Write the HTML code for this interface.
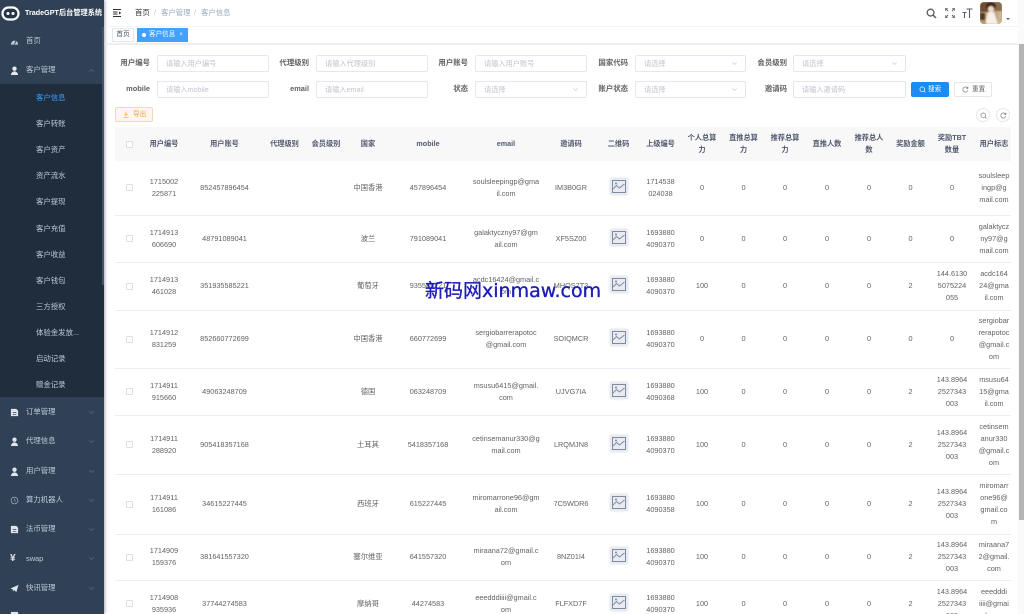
<!DOCTYPE html>
<html lang="zh"><head><meta charset="utf-8"><title>TradeGPT</title>
<style>
*{box-sizing:border-box}
html,body{margin:0;padding:0;width:1024px;height:614px;overflow:hidden;background:#fff}
body{font-family:"Liberation Sans","Noto Sans CJK SC",sans-serif;position:relative;color:#606266;font-size:7.3px;filter:blur(.35px)}
.a{position:absolute;white-space:nowrap}
#side{position:absolute;left:0;top:0;width:104px;height:614px;background:#304156;overflow:hidden;box-shadow:1px 0 3px rgba(0,21,41,.35)}
#sub{position:absolute;left:0;top:84px;width:104px;height:313px;background:#1f2d3d}
.m{position:absolute;left:26px;color:#bfcbd9;font-size:7.4px;line-height:12px;white-space:nowrap}
.s{position:absolute;left:36px;color:#bfcbd9;font-size:7.4px;line-height:12px;white-space:nowrap}
.ic{position:absolute;left:10px;width:9px;height:9px}
.ar{position:absolute;left:89px;width:5px;height:3px}
.lb{position:absolute;font-weight:700;font-size:7.4px;color:#606266;line-height:12px;text-align:right;white-space:nowrap}
.in{position:absolute;height:17px;border:1px solid #e4e7ed;border-radius:2px;background:#fff;color:#c0c4cc;font-size:7.2px;line-height:15px;padding-left:8px;white-space:nowrap}
.in svg{position:absolute;right:8px;top:6px;width:5px;height:3px}
#tw{position:absolute;left:115px;top:127px;width:896px;height:487px;overflow:hidden}
table{border-collapse:collapse;table-layout:fixed;width:900px}
td,th{padding:0;text-align:center;vertical-align:middle;line-height:12px;border-bottom:1px solid #ebeef5;font-size:7.3px;font-weight:400;white-space:nowrap;overflow:hidden}
th{background:#f8f8f9;color:#515a6e;font-weight:700;border-bottom:0;font-size:7.2px}
.cb{display:inline-block;width:7px;height:7px;border:1px solid #dcdfe6;border-radius:1px;background:#fff;vertical-align:middle}
.im{display:block;margin:-3px auto 0;width:18px;height:17px;background:#e9ebf2;border-radius:2px;box-shadow:0 0 2px rgba(0,0,0,.15);padding:2px}
.im svg{display:block;width:14px;height:13px}
</style></head><body>

<div id="side">
  <div id="sub"></div>
  <div style="position:absolute;left:102px;top:27px;width:2px;height:258px;background:#43536a"></div>
  <svg class="a" style="left:1px;top:6px" width="19" height="15" viewBox="0 0 19 15"><rect x="1.5" y="1.5" width="16" height="12" rx="6" fill="#26364a" stroke="#fff" stroke-width="2.2"/><circle cx="7" cy="7.5" r="1.5" fill="#fff"/><circle cx="12" cy="7.5" r="1.5" fill="#fff"/></svg>
  <div class="a" style="left:25px;top:6px;color:#fff;font-weight:700;font-size:7.2px;line-height:14px">TradeGPT后台管理系统</div>

  <svg class="ic" style="top:37px" viewBox="0 0 10 10"><path d="M1 8.500a4 4.500 0 0 1 8 0z" fill="#bfcbd9"/><path d="M5 8 6.500 4.500" stroke="#304156" stroke-width="1"/></svg><div class="m" style="top:35px">首页</div>
  <svg class="ic" style="top:66px" viewBox="0 0 10 10"><circle cx="5" cy="3" r="2.400" fill="#e4eaf1"/><path d="M1 10a4 4 0 0 1 8 0z" fill="#e4eaf1"/></svg><div class="m" style="top:64px">客户管理</div>
  <svg class="ar" style="top:69px" viewBox="0 0 5 3"><path d="M.3 2.700 2.500.5l2.200 2.200" fill="none" stroke="#66758a" stroke-width=".6"/></svg>

  <div class="s" style="top:92px;color:#409eff">客户信息</div>
  <div class="s" style="top:118px">客户转账</div>
  <div class="s" style="top:144px">客户资产</div>
  <div class="s" style="top:170px">资产流水</div>
  <div class="s" style="top:196px">客户提现</div>
  <div class="s" style="top:223px">客户充值</div>
  <div class="s" style="top:249px">客户收益</div>
  <div class="s" style="top:275px">客户钱包</div>
  <div class="s" style="top:301px">三方授权</div>
  <div class="s" style="top:327px">体验金发放...</div>
  <div class="s" style="top:353px">启动记录</div>
  <div class="s" style="top:379px">赠金记录</div>

  <svg class="ic" style="top:408px" viewBox="0 0 10 10"><path d="M1 1h6l2 2v6H1z" fill="#dfe5ec"/><path d="M3 5h4M3 7h4" stroke="#304156" stroke-width=".8"/></svg><div class="m" style="top:406px">订单管理</div>
  <svg class="ic" style="top:437px" viewBox="0 0 10 10"><circle cx="5" cy="3" r="2.400" fill="#dfe5ec"/><path d="M1 10a4 4 0 0 1 8 0z" fill="#dfe5ec"/></svg><div class="m" style="top:435px">代理信息</div>
  <svg class="ic" style="top:467px" viewBox="0 0 10 10"><circle cx="5" cy="3" r="2.400" fill="#dfe5ec"/><path d="M1 10a4 4 0 0 1 8 0z" fill="#dfe5ec"/></svg><div class="m" style="top:465px">用户管理</div>
  <svg class="ic" style="top:496px" viewBox="0 0 10 10"><circle cx="5" cy="5" r="3.800" fill="none" stroke="#9fb0c2" stroke-width=".8"/><path d="M5 2.800V5l1.500 1" fill="none" stroke="#9fb0c2" stroke-width=".7"/></svg><div class="m" style="top:494px">算力机器人</div>
  <svg class="ic" style="top:525px" viewBox="0 0 10 10"><path d="M1 1h6l2 2v6H1z" fill="#dfe5ec"/><path d="M3 5h4M3 7h4" stroke="#304156" stroke-width=".8"/></svg><div class="m" style="top:523px">法币管理</div>
  <div class="a" style="left:10px;top:552px;color:#dfe5ec;font-size:10px;line-height:13px;font-weight:700">¥</div><div class="m" style="top:553px">swap</div>
  <svg class="ic" style="top:584px" viewBox="0 0 10 10"><path d="M.5 5 9.500 1 7 9 4.500 6.500 3.500 8.500 3 6z" fill="#dfe5ec"/></svg><div class="m" style="top:582px">快讯管理</div>
  <svg class="ic" style="top:611px" viewBox="0 0 10 10"><path d="M1 1h8v8H1z" fill="#dfe5ec"/></svg>

  <svg class="ar" style="top:411px" viewBox="0 0 5 3"><path d="M.3.3 2.500 2.500 4.700.3" fill="none" stroke="#66758a" stroke-width=".6"/></svg>
  <svg class="ar" style="top:440px" viewBox="0 0 5 3"><path d="M.3.3 2.500 2.500 4.700.3" fill="none" stroke="#66758a" stroke-width=".6"/></svg>
  <svg class="ar" style="top:470px" viewBox="0 0 5 3"><path d="M.3.3 2.500 2.500 4.700.3" fill="none" stroke="#66758a" stroke-width=".6"/></svg>
  <svg class="ar" style="top:499px" viewBox="0 0 5 3"><path d="M.3.3 2.500 2.500 4.700.3" fill="none" stroke="#66758a" stroke-width=".6"/></svg>
  <svg class="ar" style="top:528px" viewBox="0 0 5 3"><path d="M.3.3 2.500 2.500 4.700.3" fill="none" stroke="#66758a" stroke-width=".6"/></svg>
  <svg class="ar" style="top:557px" viewBox="0 0 5 3"><path d="M.3.3 2.500 2.500 4.700.3" fill="none" stroke="#66758a" stroke-width=".6"/></svg>
  <svg class="ar" style="top:587px" viewBox="0 0 5 3"><path d="M.3.3 2.500 2.500 4.700.3" fill="none" stroke="#66758a" stroke-width=".6"/></svg>
</div>

<!-- top bar -->
<div class="a" style="left:105px;top:26px;width:913px;height:1px;background:#f2f3f5"></div>
<svg class="a" style="left:113px;top:9px" width="9" height="8" viewBox="0 0 9 8"><path d="M0 .5h8M0 3h4.500M0 5h4.500M0 7.500h8" stroke="#303133" stroke-width="1"/><path d="M6 2.500v3L8.300 4z" fill="#303133"/></svg>
<div class="a" style="left:135px;top:7px;line-height:12px;font-size:7.4px;color:#303133">首页</div>
<div class="a" style="left:154px;top:7px;line-height:12px;font-size:7.4px;color:#c0c4cc">/</div>
<div class="a" style="left:161px;top:7px;line-height:12px;font-size:7.4px;color:#97a8be">客户管理</div>
<div class="a" style="left:194px;top:7px;line-height:12px;font-size:7.4px;color:#c0c4cc">/</div>
<div class="a" style="left:201px;top:7px;line-height:12px;font-size:7.4px;color:#97a8be">客户信息</div>

<svg class="a" style="left:926px;top:8px" width="11" height="11" viewBox="0 0 11 11"><circle cx="4.600" cy="4.600" r="3.400" fill="none" stroke="#5a5e66" stroke-width="1.300"/><path d="M7 7l3 3" stroke="#5a5e66" stroke-width="1.500"/></svg>
<svg class="a" style="left:945px;top:8px" width="10" height="10" viewBox="0 0 10 10"><path d="M0 3V0h3M7 0h3v3M10 7v3H7M3 10H0V7" fill="none" stroke="#5a5e66" stroke-width="1.200"/><path d="M1 1l2 2M9 1 7 3M9 9 7 7M1 9l2-2" stroke="#5a5e66" stroke-width="1"/></svg>
<svg class="a" style="left:962px;top:8px" width="11" height="11" viewBox="0 0 11 11"><path d="M4.500 1h6M7.500 1v9M.5 4.500h4M2.500 4.500V10" fill="none" stroke="#5a5e66" stroke-width="1.100"/></svg>
<svg class="a" style="left:980px;top:2px" width="22" height="22" viewBox="0 0 22 22"><defs><clipPath id="av"><rect width="22" height="22" rx="4"/></clipPath><filter id="bl"><feGaussianBlur stdDeviation=".8"/></filter></defs><g clip-path="url(#av)"><rect width="22" height="22" fill="#c2a988"/><g filter="url(#bl)"><rect x="0" y="0" width="9" height="10" fill="#6e4d30"/><rect x="14" y="0" width="8" height="9" fill="#8a6c4d"/><ellipse cx="11" cy="4" rx="5" ry="4" fill="#3f2719"/><ellipse cx="11" cy="7" rx="3" ry="3" fill="#ecd8c4"/><path d="M5 22 8 10h6l4 12z" fill="#f6f0e6"/><rect x="0" y="11" width="5" height="7" fill="#4f3b22"/><rect x="0" y="18" width="6" height="4" fill="#b4976f"/><rect x="18" y="10" width="4" height="12" fill="#cbb593"/></g></g></svg>
<svg class="a" style="left:1006px;top:18px" width="4" height="2" viewBox="0 0 4 2"><path d="M0 0h4L2 2z" fill="#5a5e66"/></svg>

<!-- tags -->
<div class="a" style="left:105px;top:43px;width:913px;height:2px;background:#eceef1"></div>
<div class="a" style="left:112px;top:28px;width:22px;height:14px;border:1px solid #e4e7ed;background:#fff;font-size:6.6px;line-height:12px;text-align:center;color:#495060">首页</div>
<div class="a" style="left:137px;top:28px;width:51px;height:14px;background:#42a0ff;color:#fff;font-size:6.6px;line-height:14px;padding-left:12px">客户信息<span style="margin-left:4px;font-size:6px">×</span></div>
<div class="a" style="left:142px;top:33px;width:4px;height:4px;border-radius:50%;background:#fff"></div>

<!-- filters -->
<div class="lb" style="left:100px;width:50px;top:57px">用户编号</div><div class="in" style="left:157px;top:55px;width:112px">请输入用户编号</div>
<div class="lb" style="left:259px;width:50px;top:57px">代理级别</div><div class="in" style="left:316px;top:55px;width:112px">请输入代理级别</div>
<div class="lb" style="left:418px;width:50px;top:57px">用户账号</div><div class="in" style="left:475px;top:55px;width:112px">请输入用户账号</div>
<div class="lb" style="left:578px;width:50px;top:57px">国家代码</div><div class="in" style="left:635px;top:55px;width:111px">请选择<svg viewBox="0 0 5 3"><path d="M.3.3 2.500 2.500 4.700.3" fill="none" stroke="#c0c4cc" stroke-width=".6"/></svg></div>
<div class="lb" style="left:737px;width:50px;top:57px">会员级别</div><div class="in" style="left:793px;top:55px;width:113px">请选择<svg viewBox="0 0 5 3"><path d="M.3.3 2.500 2.500 4.700.3" fill="none" stroke="#c0c4cc" stroke-width=".6"/></svg></div>

<div class="lb" style="left:100px;width:50px;top:83px">mobile</div><div class="in" style="left:157px;top:81px;width:112px">请输入mobile</div>
<div class="lb" style="left:259px;width:50px;top:83px">email</div><div class="in" style="left:316px;top:81px;width:112px">请输入email</div>
<div class="lb" style="left:418px;width:50px;top:83px">状态</div><div class="in" style="left:475px;top:81px;width:112px">请选择<svg viewBox="0 0 5 3"><path d="M.3.3 2.500 2.500 4.700.3" fill="none" stroke="#c0c4cc" stroke-width=".6"/></svg></div>
<div class="lb" style="left:578px;width:50px;top:83px">账户状态</div><div class="in" style="left:635px;top:81px;width:111px">请选择<svg viewBox="0 0 5 3"><path d="M.3.3 2.500 2.500 4.700.3" fill="none" stroke="#c0c4cc" stroke-width=".6"/></svg></div>
<div class="lb" style="left:737px;width:50px;top:83px">邀请码</div><div class="in" style="left:793px;top:81px;width:113px">请输入邀请码</div>

<div class="a" style="left:911px;top:82px;width:38px;height:15px;background:#1c8cf0;border-radius:2px;color:#fff;font-size:6.6px;line-height:15px;padding-left:17px">搜索</div>
<svg class="a" style="left:919px;top:86px" width="7" height="7" viewBox="0 0 7 7"><circle cx="3.200" cy="3.200" r="2.300" fill="none" stroke="#fff" stroke-width=".7"/><path d="M5 5l1.400 1.400" stroke="#fff" stroke-width=".7"/></svg>
<div class="a" style="left:954px;top:82px;width:38px;height:15px;border:1px solid #e4e7ed;border-radius:2px;color:#606266;font-size:6.6px;line-height:13px;padding-left:17px">重置</div>
<svg class="a" style="left:962px;top:86px" width="7" height="7" viewBox="0 0 7 7"><path d="M5.700 2.200A2.600 2.600 0 1 0 6 4" fill="none" stroke="#606266" stroke-width=".6"/><path d="M5.900 .8v1.700H4.200" fill="none" stroke="#606266" stroke-width=".6"/></svg>

<div class="a" style="left:115px;top:107px;width:38px;height:15px;background:#fdf6ec;border:1px solid #f5dab1;border-radius:2px;color:#e6a23c;font-size:6.6px;line-height:13px;padding-left:17px">导出</div>
<svg class="a" style="left:123px;top:111px" width="6" height="7" viewBox="0 0 6 7"><path d="M3 .5v4M1.400 3 3 4.600 4.600 3M.5 6.300h5" fill="none" stroke="#e6a23c" stroke-width=".6"/></svg>
<div class="a" style="left:976px;top:108px;width:14px;height:14px;border:1px solid #e4e7ed;border-radius:50%"></div>
<svg class="a" style="left:980px;top:112px" width="7" height="7" viewBox="0 0 7 7"><circle cx="3.200" cy="3.200" r="2.300" fill="none" stroke="#606266" stroke-width=".6"/><path d="M5 5l1.400 1.400" stroke="#606266" stroke-width=".6"/></svg>
<div class="a" style="left:996px;top:108px;width:14px;height:14px;border:1px solid #e4e7ed;border-radius:50%"></div>
<svg class="a" style="left:1000px;top:112px" width="7" height="7" viewBox="0 0 7 7"><path d="M5.700 2.200A2.600 2.600 0 1 0 6 4" fill="none" stroke="#606266" stroke-width=".6"/><path d="M5.900 .8v1.700H4.200" fill="none" stroke="#606266" stroke-width=".6"/></svg>

<!-- table -->
<div id="tw"><table>
<colgroup><col style="width:28px"><col style="width:42px"><col style="width:79px"><col style="width:41px"><col style="width:42px"><col style="width:42px"><col style="width:78px"><col style="width:78px"><col style="width:52px"><col style="width:43px"><col style="width:41px"><col style="width:42px"><col style="width:41px"><col style="width:42px"><col style="width:42px"><col style="width:42px"><col style="width:41px"><col style="width:42px"><col style="width:42px"></colgroup>
<tr style="height:34px"><th><span class="cb"></span></th><th>用户编号</th><th>用户账号</th><th>代理级别</th><th>会员级别</th><th>国家</th><th>mobile</th><th>email</th><th>邀请码</th><th>二维码</th><th>上级编号</th><th>个人总算<br>力</th><th>直推总算<br>力</th><th>推荐总算<br>力</th><th>直推人数</th><th>推荐总人<br>数</th><th>奖励金额</th><th>奖励TBT<br>数量</th><th>用户标志</th></tr>

<tr style="height:54px"><td><span class="cb"></span></td><td>1715002<br>225871</td><td>852457896454</td><td></td><td></td><td>中国香港</td><td>457896454</td><td>soulsleepingp@gma<br>il.com</td><td>IM3B0GR</td><td><span class="im"><svg viewBox="0 0 14 13"><rect x=".5" y=".5" width="13" height="12" fill="none" stroke="#7f8a9e"/><path d="M1 9l3.500-3.500 3 2.500L12.500 4" fill="none" stroke="#7f8a9e"/><circle cx="4" cy="3.500" r="1" fill="#7f8a9e"/></svg></span></td><td>1714538<br>024038</td><td>0</td><td>0</td><td>0</td><td>0</td><td>0</td><td>0</td><td>0</td><td>soulsleep<br>ingp@g<br>mail.com</td></tr>

<tr style="height:47px"><td><span class="cb"></span></td><td>1714913<br>606690</td><td>48791089041</td><td></td><td></td><td>波兰</td><td>791089041</td><td>galaktyczny97@gm<br>ail.com</td><td>XF5SZ00</td><td><span class="im"><svg viewBox="0 0 14 13"><rect x=".5" y=".5" width="13" height="12" fill="none" stroke="#7f8a9e"/><path d="M1 9l3.500-3.500 3 2.500L12.500 4" fill="none" stroke="#7f8a9e"/><circle cx="4" cy="3.500" r="1" fill="#7f8a9e"/></svg></span></td><td>1693880<br>4090370</td><td>0</td><td>0</td><td>0</td><td>0</td><td>0</td><td>0</td><td>0</td><td>galaktycz<br>ny97@g<br>mail.com</td></tr>

<tr style="height:48px"><td><span class="cb"></span></td><td>1714913<br>461028</td><td>351935585221</td><td></td><td></td><td>葡萄牙</td><td>935585221</td><td>acdc16424@gmail.c<br>om</td><td>MHQS7T3</td><td><span class="im"><svg viewBox="0 0 14 13"><rect x=".5" y=".5" width="13" height="12" fill="none" stroke="#7f8a9e"/><path d="M1 9l3.500-3.500 3 2.500L12.500 4" fill="none" stroke="#7f8a9e"/><circle cx="4" cy="3.500" r="1" fill="#7f8a9e"/></svg></span></td><td>1693880<br>4090370</td><td>100</td><td>0</td><td>0</td><td>0</td><td>0</td><td>2</td><td>144.6130<br>5075224<br>055</td><td>acdc164<br>24@gma<br>il.com</td></tr>

<tr style="height:58px"><td><span class="cb"></span></td><td>1714912<br>831259</td><td>852660772699</td><td></td><td></td><td>中国香港</td><td>660772699</td><td>sergiobarrerapotoc<br>@gmail.com</td><td>SOIQMCR</td><td><span class="im"><svg viewBox="0 0 14 13"><rect x=".5" y=".5" width="13" height="12" fill="none" stroke="#7f8a9e"/><path d="M1 9l3.500-3.500 3 2.500L12.500 4" fill="none" stroke="#7f8a9e"/><circle cx="4" cy="3.500" r="1" fill="#7f8a9e"/></svg></span></td><td>1693880<br>4090370</td><td>0</td><td>0</td><td>0</td><td>0</td><td>0</td><td>0</td><td>0</td><td>sergiobar<br>rerapotoc<br>@gmail.c<br>om</td></tr>

<tr style="height:47px"><td><span class="cb"></span></td><td>1714911<br>915660</td><td>49063248709</td><td></td><td></td><td>德国</td><td>063248709</td><td>msusu6415@gmail.<br>com</td><td>UJVG7IA</td><td><span class="im"><svg viewBox="0 0 14 13"><rect x=".5" y=".5" width="13" height="12" fill="none" stroke="#7f8a9e"/><path d="M1 9l3.500-3.500 3 2.500L12.500 4" fill="none" stroke="#7f8a9e"/><circle cx="4" cy="3.500" r="1" fill="#7f8a9e"/></svg></span></td><td>1693880<br>4090368</td><td>100</td><td>0</td><td>0</td><td>0</td><td>0</td><td>2</td><td>143.8964<br>2527343<br>003</td><td>msusu64<br>15@gma<br>il.com</td></tr>

<tr style="height:59px"><td><span class="cb"></span></td><td>1714911<br>288920</td><td>905418357168</td><td></td><td></td><td>土耳其</td><td>5418357168</td><td>cetinsemanur330@g<br>mail.com</td><td>LRQMJN8</td><td><span class="im"><svg viewBox="0 0 14 13"><rect x=".5" y=".5" width="13" height="12" fill="none" stroke="#7f8a9e"/><path d="M1 9l3.500-3.500 3 2.500L12.500 4" fill="none" stroke="#7f8a9e"/><circle cx="4" cy="3.500" r="1" fill="#7f8a9e"/></svg></span></td><td>1693880<br>4090370</td><td>100</td><td>0</td><td>0</td><td>0</td><td>0</td><td>2</td><td>143.8964<br>2527343<br>003</td><td>cetinsem<br>anur330<br>@gmail.c<br>om</td></tr>

<tr style="height:60px"><td><span class="cb"></span></td><td>1714911<br>161086</td><td>34615227445</td><td></td><td></td><td>西班牙</td><td>615227445</td><td>miromarrone96@gm<br>ail.com</td><td>7C5WDR6</td><td><span class="im"><svg viewBox="0 0 14 13"><rect x=".5" y=".5" width="13" height="12" fill="none" stroke="#7f8a9e"/><path d="M1 9l3.500-3.500 3 2.500L12.500 4" fill="none" stroke="#7f8a9e"/><circle cx="4" cy="3.500" r="1" fill="#7f8a9e"/></svg></span></td><td>1693880<br>4090358</td><td>100</td><td>0</td><td>0</td><td>0</td><td>0</td><td>2</td><td>143.8964<br>2527343<br>003</td><td>miromarr<br>one96@<br>gmail.co<br>m</td></tr>

<tr style="height:46px"><td><span class="cb"></span></td><td>1714909<br>159376</td><td>381641557320</td><td></td><td></td><td>塞尔维亚</td><td>641557320</td><td>miraana72@gmail.c<br>om</td><td>8NZ01I4</td><td><span class="im"><svg viewBox="0 0 14 13"><rect x=".5" y=".5" width="13" height="12" fill="none" stroke="#7f8a9e"/><path d="M1 9l3.500-3.500 3 2.500L12.500 4" fill="none" stroke="#7f8a9e"/><circle cx="4" cy="3.500" r="1" fill="#7f8a9e"/></svg></span></td><td>1693880<br>4090370</td><td>100</td><td>0</td><td>0</td><td>0</td><td>0</td><td>2</td><td>143.8964<br>2527343<br>003</td><td>miraana7<br>2@gmail.<br>com</td></tr>

<tr style="height:47px"><td><span class="cb"></span></td><td>1714908<br>935936</td><td>37744274583</td><td></td><td></td><td>摩纳哥</td><td>44274583</td><td>eeedddiiii@gmail.c<br>om</td><td>FLFXD7F</td><td><span class="im"><svg viewBox="0 0 14 13"><rect x=".5" y=".5" width="13" height="12" fill="none" stroke="#7f8a9e"/><path d="M1 9l3.500-3.500 3 2.500L12.500 4" fill="none" stroke="#7f8a9e"/><circle cx="4" cy="3.500" r="1" fill="#7f8a9e"/></svg></span></td><td>1693880<br>4090370</td><td>100</td><td>0</td><td>0</td><td>0</td><td>0</td><td>2</td><td>143.8964<br>2527343<br>003</td><td>eeedddi<br>iiii@gmai<br>l.com</td></tr>
</table></div>

<!-- page scrollbar -->
<div class="a" style="left:1018px;top:0;width:6px;height:614px;background:#fafafa"></div>
<div class="a" style="left:1019px;top:44px;width:5px;height:476px;background:#b4b4b4"></div>

<!-- watermark -->
<div class="a" style="left:425px;top:278px;font-family:'DejaVu Sans','Noto Sans CJK SC',sans-serif;font-size:19px;line-height:26px;color:#1c1cb8;-webkit-text-stroke:.35px #1c1cb8">新码网xinmaw.com</div>
</body></html>
